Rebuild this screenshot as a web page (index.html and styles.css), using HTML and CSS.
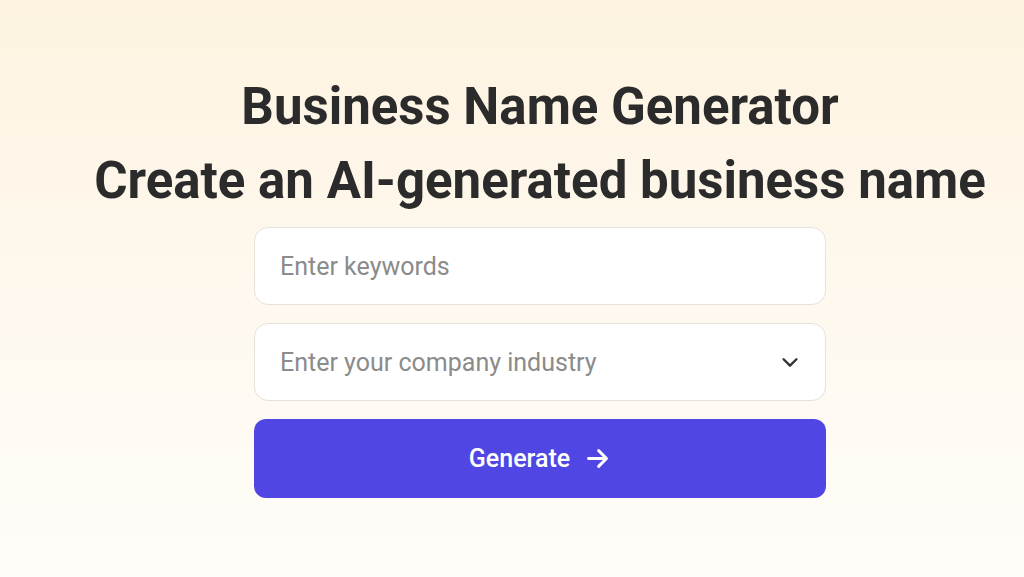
FILE: index.html
```html
<!DOCTYPE html>
<html lang="en">
<head>
<meta charset="utf-8">
<title>Business Name Generator</title>
<link rel="stylesheet" href="styles.css">
</head>
<body>
<main class="page">
  <h1 class="title">Business Name Generator</h1>
  <h2 class="subtitle">Create an AI-generated business name</h2>
  <form class="form">
    <input class="field" type="text" placeholder="Enter keywords">
    <div class="field select">
      <span class="placeholder">Enter your company industry</span>
      <svg class="chevron" width="22" height="22" viewBox="0 0 24 24" fill="none" stroke="currentColor" stroke-width="2.6" stroke-linecap="round" stroke-linejoin="round"><path d="M5 9l7 7 7-7"/></svg>
    </div>
    <button class="btn" type="button">Generate
      <svg class="arrow" width="27" height="27" viewBox="0 0 24 24" fill="none" stroke="currentColor" stroke-width="2.6" stroke-linecap="round" stroke-linejoin="round"><path d="M4 12h15M13 5l7 7-7 7"/></svg>
    </button>
  </form>
</main>
</body>
</html>
```
FILE: styles.css
```css
html, body {
  margin: 0;
  height: 100%;
}
body {
  background: linear-gradient(180deg, #fdf3e0 0%, #fef8ee 50%, #fffdf9 100%);
  font-family: Roboto, "Liberation Sans", Arial, sans-serif;
  color: #2b2b2b;
}
.page {
  display: flex;
  flex-direction: column;
  align-items: center;
  padding: 70px 0 0 56px;
}
.title, .subtitle {
  margin: 0;
  font-size: 51px;
  font-weight: 700;
  line-height: 74px;
  color: #2b2b2b;
  white-space: nowrap;
}
.form {
  display: flex;
  flex-direction: column;
  gap: 18px;
  width: 572px;
  margin-top: 9px;
}
.field {
  box-sizing: border-box;
  height: 78px;
  width: 100%;
  border: 1px solid #e6e2da;
  border-radius: 14px;
  background: #fff;
  padding: 0 25px;
  font-family: inherit;
  font-size: 25px;
  color: #2b2b2b;
  outline: none;
}
.field::placeholder, .placeholder {
  color: #8b8b8b;
}
.select {
  display: flex;
  align-items: center;
  justify-content: space-between;
}
.chevron {
  color: #333;
  margin-right: -1px;
}
.btn {
  height: 79px;
  border: 0;
  border-radius: 12px;
  background: #4f46e4;
  color: #fff;
  font-family: inherit;
  font-size: 25px;
  font-weight: 500;
  display: flex;
  align-items: center;
  justify-content: center;
  gap: 14px;
  padding: 0;
}
```
